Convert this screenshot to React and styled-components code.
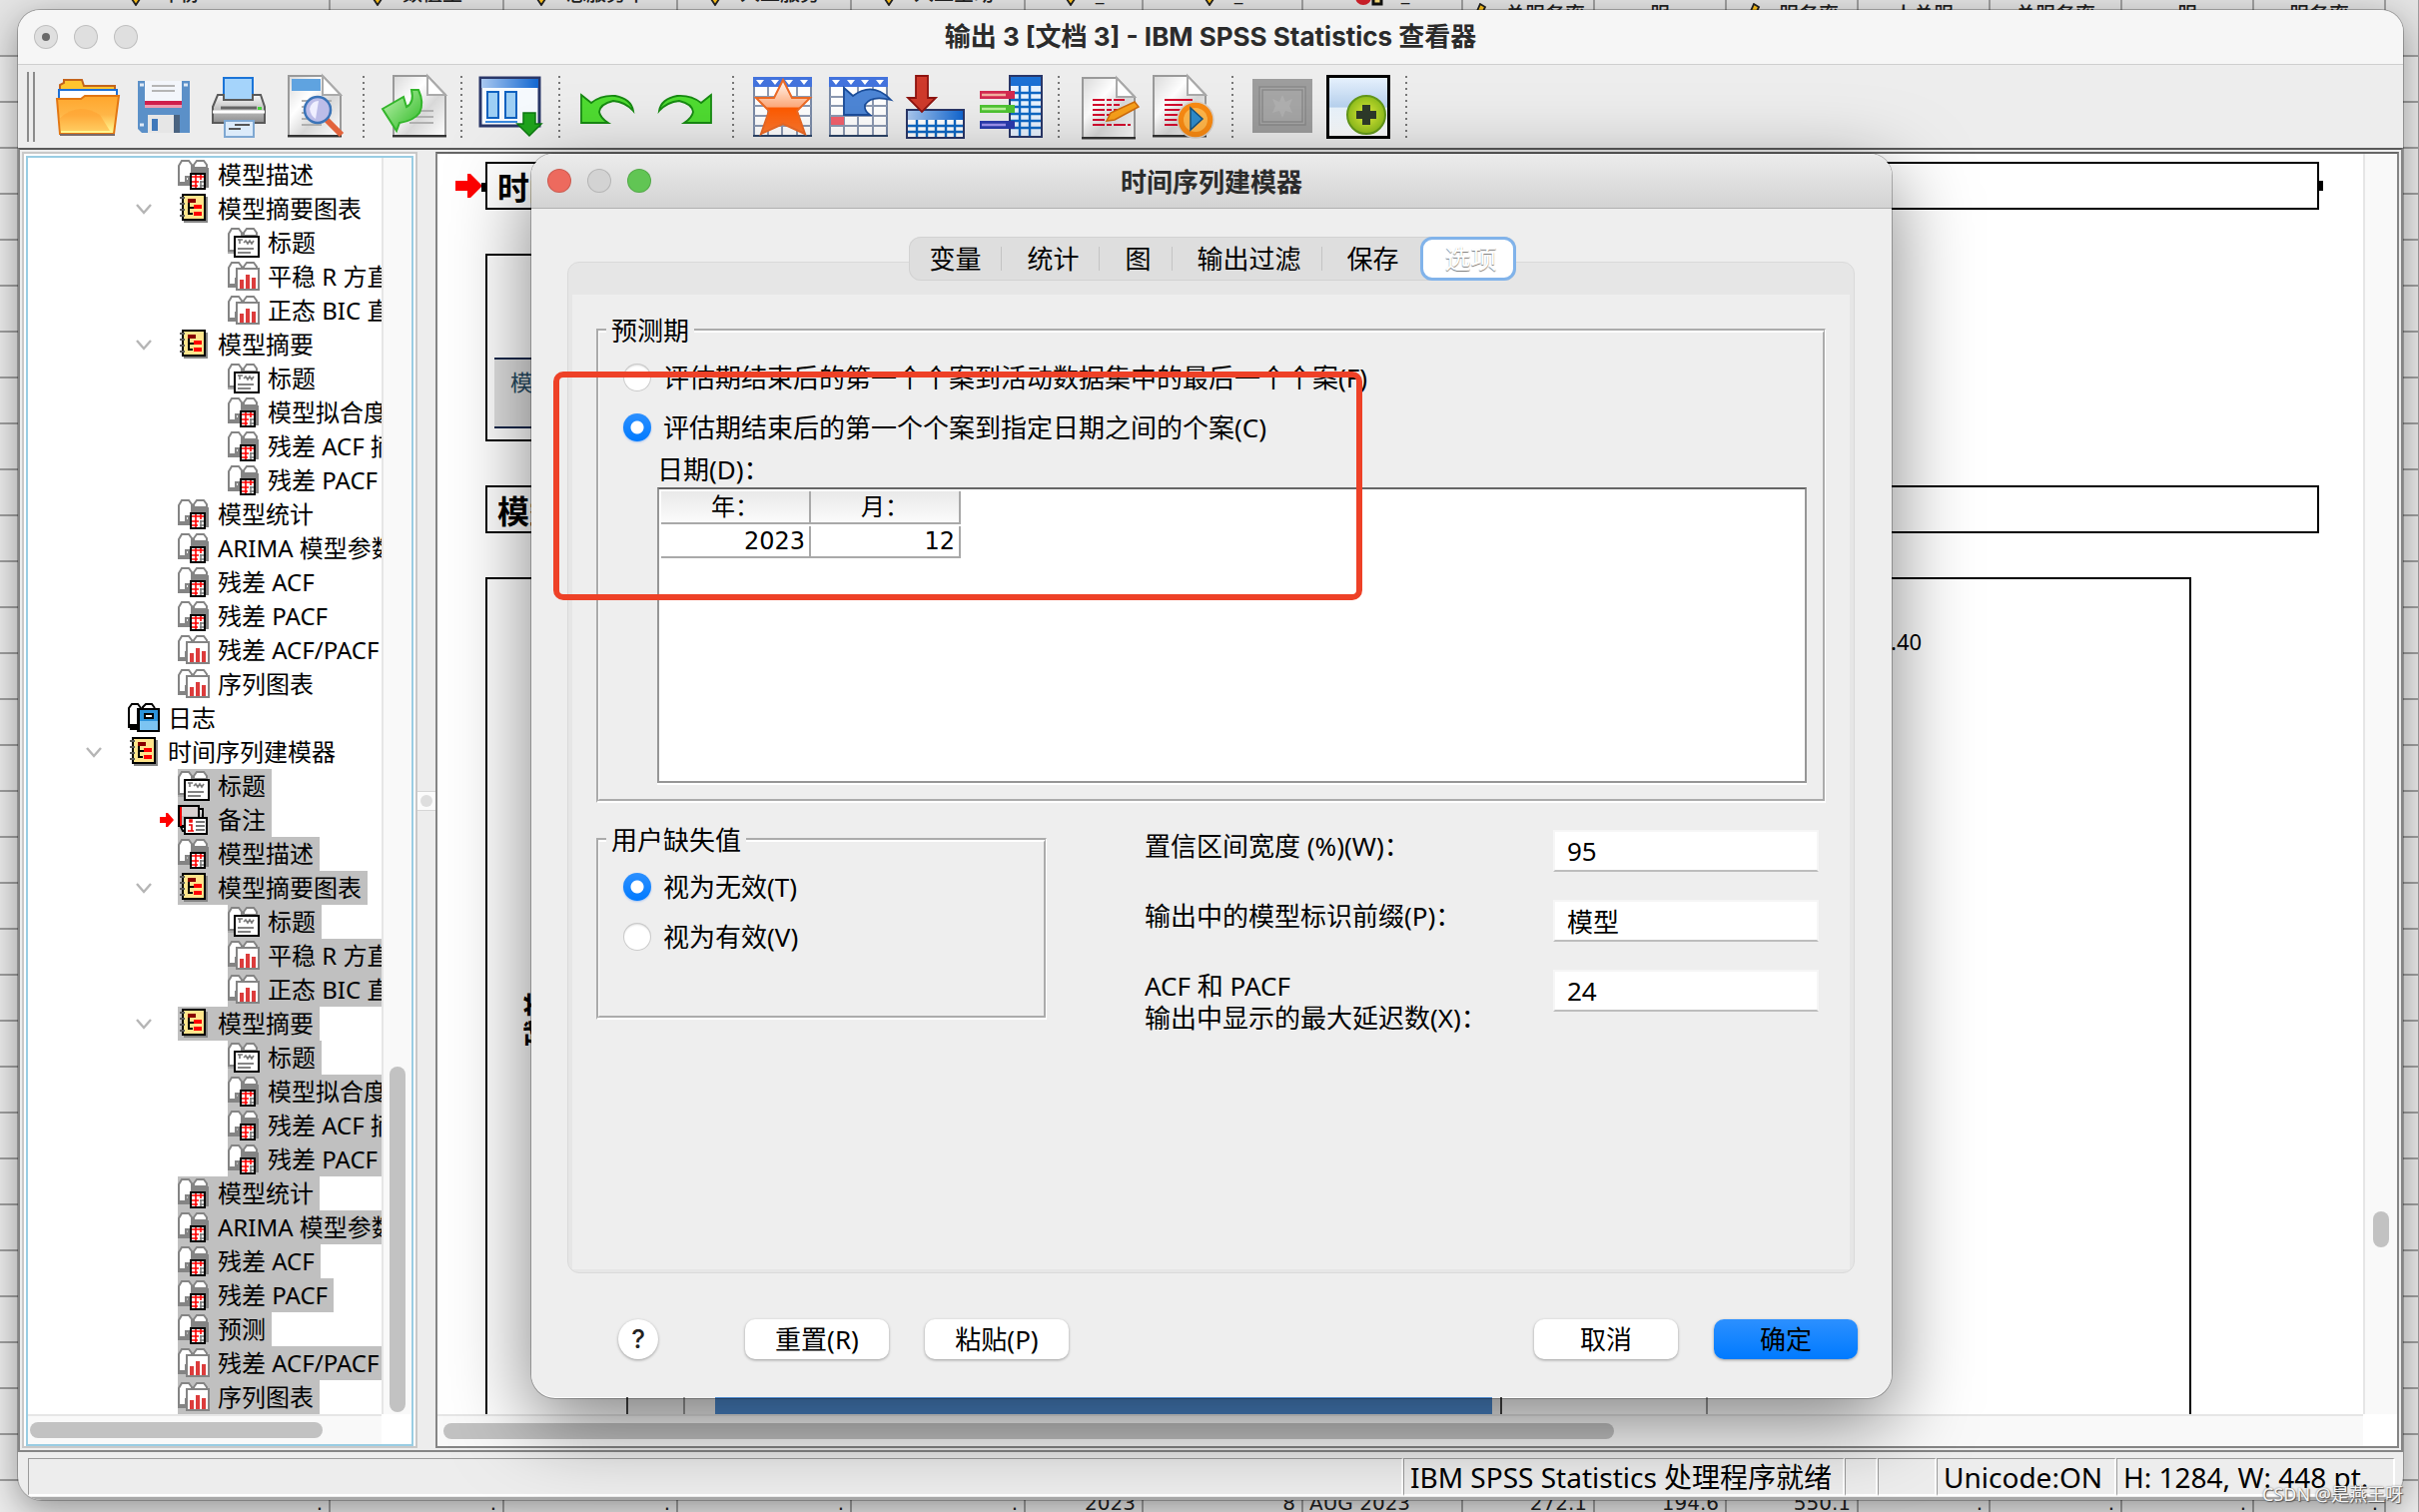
import React from "react";
import styled, { createGlobalStyle, css } from "styled-components";

const Global = createGlobalStyle`
  * { box-sizing: border-box; }
  body { margin: 0; background: #ececec; }
  body, button, input, table {
    font-family: "Noto Sans", "Noto Sans CJK SC", sans-serif;
    color: #000;
  }
`;

const Desktop = styled.div`
  position: relative;
  overflow: hidden;
  height: 100vh;
  padding: 10px 16px 0 18px;
`;

/* ---------- data editor behind the viewer ---------- */

const Sheet = styled.table`
  position: absolute;
  inset: 0 0 auto 0;
  width: 100%;
  table-layout: fixed;
  border-collapse: collapse;
  background: #ededed;
  font-size: 20px;
  line-height: 24px;
  color: #222;
`;
const SheetHead = styled.th`
  height: 56px;
  padding: 0 8px;
  border-right: 2px solid #a0a0a0;
  border-bottom: 2px solid #a0a0a0;
  background: #e4e4e4;
  font-weight: 500;
  vertical-align: top;
  white-space: nowrap;
  overflow: hidden;
`;
const HeadText = styled.span`
  display: flex;
  justify-content: center;
  align-items: flex-end;
  gap: 18px;
  margin-top: ${(p) => (p.$low ? "3px" : "-18px")};
`;
const SheetCell = styled.td`
  height: 46px;
  padding: 0 6px;
  border-bottom: 2px solid #a0a0a0;
  border-right: 2px solid #a0a0a0;
  text-align: ${(p) => (p.$left ? "left" : "right")};
  font-family: "DejaVu Sans", sans-serif;
  white-space: nowrap;
`;

const columns = [
  { w: 330, name: "年份", pen: true, v: "." },
  { w: 174, name: "数值型", pen: true, v: "." },
  { w: 174, name: "总服务率", pen: true, v: "." },
  { w: 174, name: "人工服务", pen: true, v: "." },
  { w: 174, name: "人工呈动", pen: true, v: "." },
  { w: 118, name: "_", pen: true, v: "2023" },
  { w: 160, name: "_", pen: true, v: "8" },
  { w: 160, name: "_", dot: true, v: "AUG 2023", left: true },
  { w: 132, name: "总服务率", low: true, pen: true, v: "272.1" },
  { w: 132, name: "服", low: true, v: "194.6" },
  { w: 132, name: "服务率", low: true, pen: true, v: "550.1" },
  { w: 132, name: "人总服", low: true, v: "." },
  { w: 132, name: "总服务率", low: true, v: "." },
  { w: 132, name: "服", low: true, v: "." },
  { w: 132, name: "服务率", low: true, v: "." },
  { w: 34, name: "", v: "" },
];

const Pencil = () => (
  <svg width="14" height="24" viewBox="0 0 14 24">
    <path d="M4 1h7v16l-4 6-4-6z" fill="#ffc21a" stroke="#222" strokeWidth="1.8" />
  </svg>
);
const SlantPencil = () => (
  <svg width="16" height="24" viewBox="0 0 16 24">
    <path d="M9 1l5 3-7 15-5 4 1-8z" fill="#ffc21a" stroke="#222" strokeWidth="1.8" />
  </svg>
);
const RedBall = () => (
  <svg width="28" height="22" viewBox="0 0 28 22">
    <circle cx="8" cy="13" r="8" fill="#d3202a" />
    <path d="M18 6h8v14h-8z" fill="#ffe27a" stroke="#111" strokeWidth="3" />
  </svg>
);

/* ---------- viewer window ---------- */

const Viewer = styled.main`
  position: relative;
  border-radius: 22px 22px 24px 24px;
  overflow: hidden;
  background: #ededed;
  box-shadow: 0 0 0 1px rgba(0, 0, 0, 0.25);
`;
const ViewerShadow = styled.div`
  position: relative;
  border-radius: 22px;
  box-shadow: 0 10px 36px rgba(0, 0, 0, 0.38);
`;
const TitleBar = styled.header`
  display: grid;
  grid-template-columns: 160px 1fr 160px;
  align-items: center;
  height: 55px;
  padding-left: 16px;
  padding-right: 16px;
  background: ${(p) => (p.$dialog ? "linear-gradient(#ececec, #d3d3d3)" : "#f6f6f6")};
  border-bottom: 1px solid ${(p) => (p.$dialog ? "#b0b0b0" : "#cfcfcf")};
`;
const Lights = styled.div`
  display: flex;
  gap: 16px;
`;
const Light = styled.button`
  width: 24px;
  height: 24px;
  padding: 0;
  border: 1px solid rgba(0, 0, 0, 0.14);
  border-radius: 50%;
  background: ${(p) => p.$color || "#dfdfdf"};
  display: grid;
  place-items: center;
`;
const EditedDot = styled.i`
  width: 8px;
  height: 8px;
  border-radius: 50%;
  background: #6a6a6a;
`;
const Title = styled.h1`
  margin: 0;
  text-align: center;
  font-size: 26px;
  line-height: 34px;
  font-family: ${(p) => (p.$dialog ? '"Noto Sans CJK SC"' : 'Inter, "Noto Sans CJK SC"')}, sans-serif;
  font-weight: 700;
  color: #2b2b2b;
`;

const Toolbar = styled.div`
  display: flex;
  align-items: center;
  height: 83px;
  padding: 0 0 0 9px;
`;
const Grip = styled.i`
  width: 8px;
  height: 70px;
  margin-right: 15px;
  border: solid #8c8c8c;
  border-width: 0 2px;
`;
const ToolButton = styled.button`
  width: 76px;
  height: 76px;
  padding: 6px;
  border: 0;
  background: none;
  svg { display: block; overflow: visible; }
`;
const ToolGap = styled.i`
  width: 22px;
  height: 62px;
  border: 0;
  background: repeating-linear-gradient(#777 0 2px, transparent 2px 6px) 9px 0 / 2px 100% no-repeat;
`;

const Body = styled.div`
  display: flex;
  padding: 2px;
  border: 2px solid #858585;
  border-top-color: #5a5a5a;
`;

/* ---------- outline tree ---------- */

const OutlineFrame = styled.div`
  flex: none;
  width: 396px;
  padding: 2px 2px 0;
  border: 2px solid #c8c8c8;
  background: #fff;
`;
const Outline = styled.nav`
  display: grid;
  grid-template-columns: 1fr 30px;
  grid-template-rows: auto 30px;
  border: 2px solid #99cde3;
`;
const Tree = styled.ul`
  margin: 0;
  padding: 0;
  list-style: none;
  overflow: hidden;
`;
const Row = styled.li`
  display: flex;
  align-items: center;
  height: 34px;
  padding-left: ${(p) => p.$level * 50}px;
  white-space: nowrap;
`;
const Lead = styled.span`
  flex: none;
  width: 50px;
  height: 34px;
  display: flex;
  align-items: center;
  justify-content: ${(p) => (p.$end ? "flex-end" : "flex-start")};
  padding: 0 4px 0 7px;
`;
const Node = styled.a`
  flex: none;
  display: flex;
  align-items: center;
  gap: 8px;
  height: 34px;
  padding-right: 6px;
  font-size: 24px;
  line-height: 34px;
  color: #000;
  text-decoration: none;
  background: ${(p) => (p.$on ? "#c0c0c0" : "transparent")};
`;

const Track = styled.div`
  display: flex;
  background: #f9f9f9;
  border: 0 solid #e6e6e6;
  ${(p) =>
    p.$vertical
      ? css`
          flex-direction: column;
          align-items: center;
          justify-content: ${p.$end ? "flex-end" : "flex-start"};
          border-left-width: 2px;
          padding: ${p.$before || 0}px 0 2px;
        `
      : css`
          align-items: center;
          border-top-width: 2px;
          padding-left: ${p.$before || 2}px;
        `}
`;
const Thumb = styled.i`
  width: ${(p) => p.$w};
  height: ${(p) => p.$h};
  border-radius: 8px;
  background: #c2c2c2;
`;

const Splitter = styled.div`
  flex: none;
  width: 18px;
  display: flex;
  flex-direction: column;
  padding-top: 640px;
`;
const Knob = styled.i`
  height: 20px;
  display: grid;
  place-items: center;
  background: #fbfbfb;
  border: solid #d6d6d6;
  border-width: 1px 0;
  &::after {
    content: "";
    width: 12px;
    height: 12px;
    border-radius: 50%;
    background: #dedede;
  }
`;

/* ---------- output pane ---------- */

const Output = styled.section`
  flex: 1;
  min-width: 0;
  display: grid;
  grid-template-columns: 1fr 34px;
  grid-template-rows: 1fr 32px;
  border: 2px solid #858585;
  border-top-color: #666;
  background: #fff;
`;
const Page = styled.div`
  display: flex;
  flex-direction: column;
  gap: 44px;
  min-height: 0;
  overflow: hidden;
  padding: 8px 38px 0 16px;
`;
const HeadingRow = styled.div`
  display: grid;
  grid-template-columns: 32px 1fr 6px;
  align-items: center;
`;
const Heading = styled.h2`
  margin: 0;
  height: 48px;
  padding-left: 10px;
  border: 2px solid #000;
  font-size: 32px;
  line-height: 48px;
  font-weight: 700;
  overflow: hidden;
`;
const Handle = styled.i`
  width: 4px;
  height: 10px;
  background: #000;
`;
const PivotFrame = styled.div`
  height: 188px;
  width: 1100px;
  margin-left: 32px;
  padding: 102px 7px 0;
  border: 2px solid #000;
`;
const PivotCell = styled.div`
  height: 71px;
  padding: 6px 16px;
  border: solid #14284b;
  border-width: 2px 0;
  background: #e0e0e0;
  color: #264a60;
  font-size: 22px;
  line-height: 32px;
`;
const ChartFrame = styled.div`
  flex: 1;
  display: flex;
  width: 1708px;
  margin-left: 32px;
  border: 2px solid #000;
  border-bottom: 0;
`;
const AxisTitle = styled.div`
  width: 139px;
  padding: 0 0 368px 32px;
  writing-mode: sideways-lr;
  font-size: 28px;
  line-height: 36px;
  font-weight: 700;
`;
const Plot = styled.div`
  width: 877px;
  padding: 760px 8px 0 55px;
  border: solid #444;
  border-width: 0 2px;
  background: #f0f0f0;
  display: flex;
`;
const Bar = styled.i`
  flex: 1;
  padding: 0;
  border-left: 2px solid #999;
  background: linear-gradient(90deg, #f0f0f0 30px, #4b87cb 30px);
`;
const Side = styled.div`
  width: 206px;
  border-right: 2px solid #999;
`;
const Tick = styled.div`
  margin: 49px 0 0 183px;
  font-size: 22px;
  line-height: 26px;
`;

/* ---------- status bar ---------- */

const Status = styled.footer`
  display: flex;
  height: 48px;
  padding: 6px 8px 6px 10px;
  border-bottom: 3px solid #a8a8a8;
  font-size: 28px;
  line-height: 38px;
`;
const StatusCell = styled.div`
  flex: ${(p) => (p.$w ? "none" : 1)};
  width: ${(p) => p.$w || "auto"};
  padding-left: 6px;
  border: 1px solid #9c9c9c;
  border-right: 2px solid #fff;
  border-bottom: 2px solid #fff;
  white-space: nowrap;
  height: 38px;
  line-height: 36px;
`;

/* ---------- dialog ---------- */

const Dialog = styled.section`
  position: absolute;
  left: 532px;
  top: 154px;
  width: 1362px;
  border-radius: 22px 22px 24px 24px;
  overflow: hidden;
  background: #eee;
`;
const DialogShadow = styled(Dialog)`
  height: 1246px;
  background: none;
  box-shadow: 0 0 0 1px rgba(0, 0, 0, 0.25), 0 24px 80px rgba(0, 0, 0, 0.5);
`;
const DialogBody = styled.form`
  display: flex;
  flex-direction: column;
  padding: 28px 34px 38px 36px;
`;
const Tabs = styled.div`
  position: relative;
  align-self: center;
  display: flex;
  height: 44px;
  margin-bottom: -19px;
  border-radius: 12px;
  background: #dedede;
  box-shadow: inset 0 0 0 1px #d2d2d2;
`;
const Tab = styled.button`
  height: 44px;
  padding: 0 21px 0 25px;
  border: 0;
  background: linear-gradient(#c4c4c4, #c4c4c4) right center / ${(p) => (p.$line ? "1px 24px" : "0 0")} no-repeat;
  font-size: 26px;
  line-height: 40px;
  &:first-child { padding-left: 20px; }
  ${(p) =>
    p.$on &&
    css`
      padding: 0 16px 0 22px;
      line-height: 36px;
      border: 3px solid #81b3ea;
      border-radius: 12px;
      background: #fff;
      color: #fff;
      text-shadow: 0 1px 1px #777;
    `}
`;
const Panel = styled.div`
  margin-right: 3px;
  padding: 32px 4px 3px;
  border: 1px solid #dadada;
  border-radius: 12px;
  background: #e6e6e6;
`;
const PanelInner = styled.div`
  display: flex;
  flex-direction: column;
  gap: 24px;
  min-height: 976px;
  padding: 23px 24px 0;
  background: #eee;
`;
const Group = styled.fieldset`
  margin: 0;
  min-width: 0;
  padding: ${(p) => (p.$small ? "9px 16px 54px 24px" : "9px 16px 16px 24px")};
  border: groove #fff;
  border-width: 4px 3px;
`;
const Legend = styled.legend`
  margin-left: -17px;
  padding: 0 5px;
  font-size: 26px;
  line-height: 26px;
`;
const Choice = styled.label`
  display: flex;
  align-items: center;
  gap: 12px;
  height: 50px;
  font-size: 26px;
  line-height: 32px;
`;
const Radio = styled.input`
  appearance: none;
  width: 28px;
  height: 28px;
  margin: 0;
  border-radius: 50%;
  background: #fff;
  box-shadow: inset 0 0 0 1px #cacaca, inset 0 2px 2px #ddd;
  &:checked {
    background: radial-gradient(circle, #fff 0 6px, transparent 7px), linear-gradient(#2c90ff, #007aff);
    box-shadow: 0 1px 2px rgba(0, 100, 255, 0.3);
  }
`;
const Dates = styled.div`
  margin-left: 34px;
`;
const Caption = styled.div`
  font-size: 26px;
  line-height: 35px;
`;
const DateBox = styled.div`
  height: 296px;
  padding: 2px;
  border: 2px solid #969696;
  border-top-color: #666;
  background: #fff;
  box-shadow: 0 2px #fff;
`;
const DateTable = styled.table`
  border-collapse: separate;
  border-spacing: 0 2px;
  margin-top: -2px;
  font-family: "DejaVu Sans", "Noto Sans CJK SC", sans-serif;
  font-size: 24px;
  line-height: 30px;
`;
const DateHead = styled.th`
  width: 150px;
  height: 33px;
  padding: 0;
  border: solid #a9a9a9;
  border-width: 0 2px 2px 0;
  background: linear-gradient(#e9e9e9, #fbfbfb);
  font-weight: 400;
`;
const DateCell = styled.td`
  height: 32px;
  padding: 0 4px 0 0;
  border: solid #a9a9a9;
  border-width: 0 2px 2px 0;
  text-align: right;
`;
const Lower = styled.div`
  display: grid;
  grid-template-columns: 451px 1fr;
  column-gap: 98px;
  align-items: start;
`;
const Fields = styled.div`
  display: grid;
  gap: 28px;
  padding: 3px 7px 0 0;
`;
const Field = styled.div`
  display: grid;
  grid-template-columns: 1fr 266px;
  height: 42px;
`;
const FieldLabel = styled.label`
  font-size: 26px;
  line-height: 32px;
  white-space: pre-line;
`;
const TextBox = styled.input`
  height: 42px;
  min-width: 0;
  padding: 0 12px;
  border: 2px solid #f6f6f6;
  border-bottom-color: #bdbdbd;
  background: #fff;
  font-size: 26px;
`;
const Footer = styled.div`
  display: flex;
  align-items: center;
  gap: 36px;
  padding: 46px 0 0 51px;
`;
const Push = styled.button`
  width: 144px;
  height: 40px;
  padding: 0;
  border: 0;
  border-radius: 10px;
  background: ${(p) => (p.$primary ? "linear-gradient(#2c90ff, #007aff)" : "#fff")};
  box-shadow: 0 1px 3px rgba(0, 0, 0, 0.35);
  font-size: 26px;
  line-height: 36px;
`;
const Help = styled(Push)`
  width: 40px;
  margin-right: 51px;
  border-radius: 50%;
  font-family: Inter, sans-serif;
  font-weight: 500;
  color: #222;
`;
const Spacer = styled.i`
  flex: 1;
`;

const Callout = styled.div`
  position: absolute;
  left: 554px;
  top: 372px;
  width: 810px;
  height: 229px;
  border: 6px solid #ee4127;
  border-radius: 10px;
  pointer-events: none;
`;
const Credit = styled.div`
  position: absolute;
  right: 16px;
  bottom: 6px;
  font-size: 18px;
  line-height: 24px;
  color: #f4f4f4;
  text-shadow: 1px 1px 1px #555, 0 0 2px #777;
`;

/* ---------- outline icons ---------- */

const Pages = ({ dark = "#848484" }) => (
  <>
    <path d="M10 10h21v20h-3v-2H0v-6h10z" fill={dark} />
    <path d="M1 25V8l3-5h7l3 4v12h-6v6z" fill="#fff" stroke="#848484" strokeWidth="2" />
    <path d="M16 10V7l3-4h7l3 4v3z" fill="#fff" stroke="#848484" strokeWidth="2" />
  </>
);
const treeIcons = {
  table: (
    <>
      <Pages />
      <path d="M13 16h14v15H13z" fill="#fff" stroke="#000" strokeWidth="2" />
      <path d="M14 19h12M14 24h7M14 28h6M18 17v13M23 17v5" stroke="#f00" strokeWidth="1.6" />
      <path d="M22 24h4M22 28h4M23 23v7" stroke="#777" strokeWidth="1.5" />
    </>
  ),
  title: (
    <>
      <Pages dark="#aaa" />
      <path d="M7 11h24v20H7z" fill="#fff" stroke="#000" strokeWidth="2" />
      <path d="M10 14h5M12 14v4M16 17l2-2 2 3 2-3 2 3 2-3" stroke="#777" strokeWidth="1.6" fill="none" />
      <path d="M10 23h16M10 27h13" stroke="#848484" strokeWidth="2" />
    </>
  ),
  chart: (
    <>
      <Pages />
      <path d="M9 9h22v21H9z" fill="#fff" stroke="#848484" strokeWidth="2" />
      <path d="M12 20h4v9h-4zM18 15h4v14h-4zM24 18h4v11h-4z" fill="#dc3c3c" />
    </>
  ),
  book: (
    <>
      <path d="M6 5h24v26H6z" fill="#848484" />
      <path d="M5 3h22v25H5z" fill="#ffe58c" stroke="#000" strokeWidth="2" />
      <path d="M2 6h5M2 12h5M2 18h5M2 24h5" stroke="#555" strokeWidth="2" />
      <path d="M10 7h8v4h-8z" fill="#800" />
      <path d="M11 11v11h4M11 16h5" stroke="#000" strokeWidth="2" fill="none" />
      <path d="M16 13h8v4h-8zM16 20h8v4h-8z" fill="#f00" />
    </>
  ),
  log: (
    <>
      <path d="M1 26V7l3-4h6l3 4v19zM15 9V6l3-3h6l3 4" fill="#fff" stroke="#000" strokeWidth="2" />
      <path d="M2 23h7v6H2z" fill="#000" />
      <path d="M10 8h21v22H10z" fill="#7cc4f2" stroke="#000" strokeWidth="2" />
      <path d="M11 9h19v11H11z" fill="#2c93db" />
      <path d="M9 8h3v23H9z" fill="#000" />
      <path d="M17 13h8v4h-8z" fill="#fff" stroke="#000" strokeWidth="2" />
    </>
  ),
  note: (
    <>
      <path d="M1 3h20v20H1z" fill="#d8d0d0" stroke="#000" strokeWidth="2" />
      <path d="M4 13h16v9H4z" fill="#bcbcbc" />
      <path d="M3 4v20" stroke="#e00" strokeWidth="2" />
      <path d="M3 24h6v4H5zM22 6h3v10" fill="#fff" stroke="#000" strokeWidth="2" />
      <path d="M7 15h22v16H7z" fill="#fff" stroke="#000" strokeWidth="2" />
      <path d="M12 17h2v2h-2zM11 22h3v6M10 28h6" stroke="#e00" strokeWidth="1.6" fill="none" />
      <path d="M18 19h9M18 23h9M18 27h9" stroke="#777" strokeWidth="2" />
    </>
  ),
};
const TreeIcon = ({ kind }) => (
  <svg width="32" height="34" viewBox="0 0 32 34">{treeIcons[kind]}</svg>
);
const Chevron = () => (
  <svg width="18" height="12" viewBox="0 0 18 12">
    <path d="M2 2l7 8 7-8" fill="none" stroke="#b5b5b5" strokeWidth="2.4" />
  </svg>
);
const SmallArrow = () => (
  <svg width="14" height="14" viewBox="0 0 14 14">
    <path d="M0 4h6V0h2l6 7-6 7H6v-4H0z" fill="#f00" />
  </svg>
);

const report = [
  [2, "table", "模型描述"],
  [2, "book", "模型摘要图表"],
  [3, "title", "标题"],
  [3, "chart", "平稳 R 方直方图"],
  [3, "chart", "正态 BIC 直方图"],
  [2, "book", "模型摘要"],
  [3, "title", "标题"],
  [3, "table", "模型拟合度"],
  [3, "table", "残差 ACF 摘要"],
  [3, "table", "残差 PACF 摘要"],
  [2, "table", "模型统计"],
  [2, "table", "ARIMA 模型参数"],
  [2, "table", "残差 ACF"],
  [2, "table", "残差 PACF"],
];
const charts = [
  [2, "chart", "残差 ACF/PACF 图"],
  [2, "chart", "序列图表"],
];
const pick = (list) => list.map(([level, kind, text]) => [level, kind, text, true]);
const tree = [
  ...report,
  ...charts,
  [1, "log", "日志"],
  [1, "book", "时间序列建模器"],
  ...pick([[2, "title", "标题"], [2, "note", "备注"], ...report, [2, "table", "预测"], ...charts]),
];

/* ---------- toolbar icons ---------- */

const Sheetlet = ({ x }) => (
  <>
    <path d={`M${x} 1h34l18 19v42h-52z`} fill="url(#paper)" stroke="#9a9a9a" strokeWidth="2" />
    <path d={`M${x + 34} 1v19h18z`} fill="#fff" stroke="#aaa" strokeWidth="2" />
    <path d={`M${x - 1} 61h54`} stroke="#333" strokeWidth="2" />
  </>
);
const CaseGrid = () => (
  <>
    <path d="M3 3h57v58H3z" fill="#fff" stroke="#7b8ba8" strokeWidth="2" />
    <path d="M3 22h57M3 31h57M3 41h57M3 51h57M17 12v49M31 12v49M46 12v49" stroke="#8d9ab2" strokeWidth="2" />
    <path d="M2 2h59v10H2z" fill="#4373dd" />
    <path d="M5 5h8l-4 5zM20 5h8l-4 5zM34 5h8l-4 5zM49 5h8l-4 5z" fill="#fff" />
    <path d="M2 61h59" stroke="#2d4468" strokeWidth="2" />
  </>
);
const Defs = () => (
  <defs>
    <linearGradient id="paper" x1="0" y1="0" x2="1" y2="1">
      <stop offset="0" stopColor="#d9d9d9" />
      <stop offset=".35" stopColor="#fff" />
      <stop offset=".6" stopColor="#d8d8d8" />
      <stop offset="1" stopColor="#fff" />
    </linearGradient>
    <linearGradient id="orange" x1="0" y1="0" x2="0" y2="1">
      <stop offset="0" stopColor="#ffa62c" />
      <stop offset=".5" stopColor="#ffb647" />
      <stop offset="1" stopColor="#ffff9a" />
    </linearGradient>
    <linearGradient id="green" x1="0" y1="0" x2="1" y2="1">
      <stop offset="0" stopColor="#c4f5b6" />
      <stop offset="1" stopColor="#29b81f" />
    </linearGradient>
    <linearGradient id="blue" x1="0" y1="0" x2="1" y2="0">
      <stop offset="0" stopColor="#a9c8f0" />
      <stop offset="1" stopColor="#1166d0" />
    </linearGradient>
    <linearGradient id="star" x1="0" y1="0" x2="0" y2="1">
      <stop offset=".1" stopColor="#ffe9dc" />
      <stop offset=".5" stopColor="#ffab7c" />
      <stop offset=".52" stopColor="#ff5a00" />
      <stop offset="1" stopColor="#ff7a30" />
    </linearGradient>
    <linearGradient id="grey" x1="0" y1="0" x2="0" y2="1">
      <stop offset="0" stopColor="#fafafa" />
      <stop offset="1" stopColor="#8d8d8d" />
    </linearGradient>
    <linearGradient id="sky" x1="0" y1="0" x2="0" y2="1">
      <stop offset="0" stopColor="#e8f2fd" />
      <stop offset=".5" stopColor="#b8d2ef" />
      <stop offset=".52" stopColor="#e9f3fc" />
      <stop offset="1" stopColor="#fff" />
    </linearGradient>
    <radialGradient id="lime">
      <stop offset="0" stopColor="#e3ef3a" />
      <stop offset="1" stopColor="#8dbd1c" />
    </radialGradient>
  </defs>
);
const undoPath = "M4 20L14 28Q24 20 38 21Q54 24 56 36Q48 27 36 26Q23 29 22 37Q23 43 31 48L4 48Z";

const tools = [
  ["打开", <>
    <path d="M4 20V10l4-2v-3h18l2 6h31v11z" fill="#ffc52e" stroke="#c4641c" strokeWidth="2" />
    <path d="M3 15h58v10H3z" fill="#fff" stroke="#1d6fd6" strokeWidth="2" />
    <path d="M1 24h24l4-3h34l-5 38H4z" fill="url(#orange)" stroke="#e27612" strokeWidth="2" />
    <path d="M3 44Q22 26 44 40L54 56H5z" fill="#ff9c2a" opacity=".45" />
    <path d="M4 60h55" stroke="#7a6a6a" strokeWidth="2" />
  </>],
  ["保存", <>
    <path d="M6 6h52v52H10l-4-4z" fill="#5b90c8" />
    <path d="M13 6h37v20H13z" fill="#f3f6fb" />
    <path d="M20 11h23M20 16h23" stroke="#b5b5b5" strokeWidth="2" />
    <path d="M13 26h37v4H13z" fill="#d01e4c" />
    <path d="M13 30h37v3H13z" fill="#f19bb0" />
    <path d="M16 40h32v18H16z" fill="#e6e6e6" />
    <path d="M42 40h6v18h-6z" fill="#4a6380" />
    <path d="M20 44h6v12h-6z" fill="#3f78ba" />
    <path d="M8 10h4M52 10h4M8 50h4" stroke="#dfeaf6" strokeWidth="3" />
  </>],
  ["打印", <>
    <path d="M16 3h29v22H16z" fill="#a5d4fb" stroke="#1a74d8" strokeWidth="2" />
    <path d="M10 20h6v5h29v-5h8l4 12v16H5V32z" fill="url(#grey)" stroke="#5a5a5a" strokeWidth="2" />
    <path d="M13 33h36" stroke="#666" strokeWidth="3" />
    <path d="M5 37h52" stroke="#fff" strokeWidth="3" />
    <path d="M50 32h4v3h-4z" fill="#46d33a" />
    <path d="M17 46h29v16H17z" fill="#dcebfa" stroke="#7fa8d2" strokeWidth="2" />
    <path d="M27 50h15M21 54h12" stroke="#555" strokeWidth="2" />
  </>],
  ["打印预览", <>
    <Sheetlet x={5} />
    <path d="M8 4h29v12H8z" fill="#5fa3e0" />
    <path d="M18 26h30M18 32h30M18 38h30M18 44h20M18 50h20" stroke="#b0b0b0" strokeWidth="2" />
    <path d="M43 45L58 60" stroke="#e2633c" strokeWidth="6" />
    <circle cx="34" cy="35" r="13" fill="#bcbde8" stroke="#3b74b8" strokeWidth="2.5" />
    <path d="M26 34Q28 26 35 26L32 44Q27 41 26 34z" fill="#efefff" />
  </>],
  null,
  ["重新调用对话框", <>
    <Sheetlet x={12} />
    <path d="M34 36h18M32 42h20M28 48h24" stroke="#b0b0b0" strokeWidth="2" />
    <path d="M1 34L22 22L25 32Q33 28 30 15L37 15Q43 28 38 38Q32 46 18 48L15 56Z" fill="url(#green)" stroke="#33b52b" strokeWidth="2" />
  </>],
  null,
  ["对话框", <>
    <path d="M1 3h59v48H1z" fill="#f6fafe" stroke="#2a3768" strokeWidth="3" />
    <path d="M2 4h57v9H2z" fill="url(#blue)" />
    <path d="M8 17h11v26H8zM26 17h11v26H26z" fill="#9fd0f5" stroke="#0f62c0" strokeWidth="2" />
    <path d="M6 47h32" stroke="#3a8ae0" strokeWidth="2" />
    <path d="M44 38h12v11h6L50 61L38 49h6z" fill="#1fa51c" stroke="#0d7a10" strokeWidth="1.5" />
  </>],
  null,
  ["撤销", <path d={undoPath} fill="#4fdc31" stroke="#178a12" strokeWidth="1.8" />],
  ["恢复", <path transform="matrix(-1 0 0 1 62 0)" d={undoPath} fill="#4fdc31" stroke="#178a12" strokeWidth="1.8" />],
  null,
  ["转到数据", <>
    <CaseGrid />
    <path d="M32 5L41 23H59L46 36L54 59L32 49L10 59L18 36L5 23H23Z" fill="url(#star)" stroke="#ec6a25" strokeWidth="2" />
  </>],
  ["转到个案", <>
    <CaseGrid />
    <path d="M4 42h13v8H4z" fill="#f2606c" />
    <path d="M17 13L26 21Q46 6 64 25Q44 20 38 30Q37 36 43 40H17Z" fill="#4d86d6" stroke="#1b4d9a" strokeWidth="1.8" />
  </>],
  ["转到变量", <>
    <path d="M4 35h57v28H4z" fill="#fff" stroke="#2a3768" strokeWidth="2" />
    <path d="M5 36h55v9H5z" fill="url(#blue)" />
    <path d="M5 51h55M5 57h55M14 45v17M24 45v17M33 45v17M43 45v17M52 45v17" stroke="#0f68c4" strokeWidth="2.4" />
    <path d="M13 1h12v22h8L19 37L5 23h8z" fill="#cf3a2c" stroke="#8e1410" strokeWidth="1.8" />
  </>],
  ["变量", <>
    <path d="M31 1h32v61H31z" fill="#e8f3ff" stroke="#2a3768" strokeWidth="2" />
    <path d="M32 2h30v9H32z" fill="#1b70d4" />
    <path d="M32 18h30M32 25h30M32 32h30M32 39h30M32 46h30M32 53h30M41 11v50M51 11v50" stroke="#0f68c4" strokeWidth="2.4" />
    <path d="M1 16h35v8H1z" fill="#d32a50" /><path d="M3 20h24" stroke="#f3b0a0" strokeWidth="2.5" />
    <path d="M1 30h35v8H1z" fill="#4fc332" /><path d="M3 34h24" stroke="#b9f29c" strokeWidth="2.5" />
    <path d="M1 46h35v8H1z" fill="#2b3cae" /><path d="M3 50h24" stroke="#9d93f0" strokeWidth="2.5" />
  </>],
  null,
  ["新建语法", <>
    <g transform="translate(2 2)"><Sheetlet x={4} /></g>
    <path d="M16 25h32M16 30h27M16 35h27M16 40h18M16 45h14M16 50h38" stroke="#d3092e" strokeWidth="2" strokeDasharray="12 2 5 2" />
    <path d="M30 46l4-8L58 27l4 5-24 13z" fill="#f8a01a" stroke="#cf6c0c" strokeWidth="1.5" />
  </>],
  ["运行脚本", <>
    <Sheetlet x={1} />
    <path d="M12 25h28M12 30h18M12 35h16M12 40h14M12 45h14M12 50h16" stroke="#d3092e" strokeWidth="2" />
    <circle cx="43" cy="45" r="18" fill="#f98a12" stroke="#d8d0c8" strokeWidth="1.5" />
    <circle cx="43" cy="45" r="12" fill="#ffb64a" />
    <path d="M38 33l12 11-12 11z" fill="#2f8ccc" stroke="#15527e" strokeWidth="1.5" />
  </>],
  null,
  ["选择", <>
    <path d="M2 4h60v54H2z" fill="#9d9d9d" />
    <path d="M9 12h46v38H9zM12 15h40v32H12z" fill="#a6a6a6" stroke="#8a8a8a" strokeWidth="1.5" />
    <path d="M32 20l3 7 7-3-3 7 3 7-7-2-3 7-3-7-7 2 3-7-3-7 7 3z" fill="#b0b0b0" />
  </>],
  ["添加", <>
    <path d="M1.5 1.5h61v61h-61z" fill="url(#sky)" stroke="#000" strokeWidth="3" />
    <circle cx="40" cy="40" r="19" fill="url(#lime)" stroke="#63981a" strokeWidth="2" />
    <path d="M36 30h8v6h6v8h-6v6h-8v-6h-6v-8h6z" fill="#2e3a2a" />
  </>],
  null,
];

export default function App() {
  return (
    <>
      <Global />
      <Desktop>
        <Sheet aria-hidden="true">
          <colgroup>
            {columns.map((c, i) => <col key={i} style={{ width: c.w }} />)}
          </colgroup>
          <thead>
            <tr>
              {columns.map((c, i) => (
                <SheetHead key={i}>
                  <HeadText $low={c.low}>
                    {c.pen && (c.low ? <SlantPencil /> : <Pencil />)}
                    {c.dot && <RedBall />}
                    {c.name}
                  </HeadText>
                </SheetHead>
              ))}
            </tr>
          </thead>
          <tbody>
            {Array.from({ length: 31 }, (_, i) => (
              <tr key={i}><SheetCell colSpan={columns.length} /></tr>
            ))}
            <tr>{columns.map((c, i) => <SheetCell key={i} $left={c.left}>{c.v}</SheetCell>)}</tr>
          </tbody>
        </Sheet>

        <ViewerShadow>
          <Viewer>
            <TitleBar>
              <Lights>
                <Light aria-label="关闭"><EditedDot /></Light>
                <Light aria-label="最小化" />
                <Light aria-label="缩放" />
              </Lights>
              <Title>输出 3 [文档 3] - IBM SPSS Statistics 查看器</Title>
            </TitleBar>
            <Toolbar>
              <Grip />
              {tools.map((t, i) =>
                t ? (
                  <ToolButton key={i} aria-label={t[0]}>
                    <svg width="64" height="64" viewBox="0 0 64 64">
                      {i === 0 && <Defs />}
                      {t[1]}
                    </svg>
                  </ToolButton>
                ) : (
                  <ToolGap key={i} />
                )
              )}
            </Toolbar>
            <Body>
              <OutlineFrame>
                <Outline>
                  <Tree>
                    {tree.map(([level, kind, text, on], i) => (
                      <Row key={i} $level={level}>
                        <Lead $end={kind === "note"}>
                          {kind === "book" && <Chevron />}
                          {kind === "note" && <SmallArrow />}
                        </Lead>
                        <Node href="#" $on={on}>
                          <TreeIcon kind={kind} />
                          {text}
                        </Node>
                      </Row>
                    ))}
                  </Tree>
                  <Track $vertical $end><Thumb $w="16px" $h="346px" /></Track>
                  <Track><Thumb $w="293px" $h="16px" /></Track>
                </Outline>
              </OutlineFrame>
              <Splitter><Knob /></Splitter>
              <Output>
                <Page>
                  <HeadingRow>
                    <svg width="32" height="26" viewBox="0 0 32 26">
                      <path d="M2 8h12V1h3l12 12-12 12h-3v-7H2z" fill="#f00" />
                      <path d="M28 10h4v9h-4z" fill="#000" />
                    </svg>
                    <Heading>时间序列建模器</Heading>
                    <Handle />
                  </HeadingRow>
                  <PivotFrame><PivotCell>模型</PivotCell></PivotFrame>
                  <HeadingRow>
                    <span />
                    <Heading>模型摘要</Heading>
                  </HeadingRow>
                  <ChartFrame>
                    <AxisTitle>残差</AxisTitle>
                    <Plot><Bar /></Plot>
                    <Side />
                    <Tick>.40</Tick>
                  </ChartFrame>
                </Page>
                <Track $vertical $before={1059}><Thumb $w="16px" $h="36px" /></Track>
                <Track $before={6}><Thumb $w="61%" $h="16px" /></Track>
              </Output>
            </Body>
            <Status>
              <StatusCell />
              <StatusCell $w="442px">IBM SPSS Statistics 处理程序就绪</StatusCell>
              <StatusCell $w="33px" />
              <StatusCell $w="59px" />
              <StatusCell $w="180px">Unicode:ON</StatusCell>
              <StatusCell $w="279px">H: 1284, W: 448 pt.</StatusCell>
            </Status>
          </Viewer>
        </ViewerShadow>

        <DialogShadow as="div" />
        <Dialog role="dialog" aria-label="时间序列建模器">
          <TitleBar $dialog>
            <Lights>
              <Light aria-label="关闭" $color="#ed6a5e" />
              <Light aria-label="最小化" $color="#d3d3d3" />
              <Light aria-label="缩放" $color="#61c554" />
            </Lights>
            <Title $dialog>时间序列建模器</Title>
          </TitleBar>
          <DialogBody onSubmit={(e) => e.preventDefault()}>
            <Tabs role="tablist">
              {["变量", "统计", "图", "输出过滤", "保存", "选项"].map((t, i) => (
                <Tab key={t} type="button" role="tab" $on={i === 5} $line={i < 4}>{t}</Tab>
              ))}
            </Tabs>
            <Panel>
              <PanelInner>
                <Group>
                  <Legend>预测期</Legend>
                  <Choice>
                    <Radio type="radio" name="period" />
                    评估期结束后的第一个个案到活动数据集中的最后一个个案(F)
                  </Choice>
                  <Choice>
                    <Radio type="radio" name="period" defaultChecked />
                    评估期结束后的第一个个案到指定日期之间的个案(C)
                  </Choice>
                  <Dates>
                    <Caption>日期(D)：</Caption>
                    <DateBox>
                      <DateTable>
                        <thead><tr><DateHead>年：</DateHead><DateHead>月：</DateHead></tr></thead>
                        <tbody><tr><DateCell>2023</DateCell><DateCell>12</DateCell></tr></tbody>
                      </DateTable>
                    </DateBox>
                  </Dates>
                </Group>
                <Lower>
                  <Group $small>
                    <Legend>用户缺失值</Legend>
                    <Choice>
                      <Radio type="radio" name="missing" defaultChecked />
                      视为无效(T)
                    </Choice>
                    <Choice>
                      <Radio type="radio" name="missing" />
                      视为有效(V)
                    </Choice>
                  </Group>
                  <Fields>
                    <Field>
                      <FieldLabel htmlFor="width">置信区间宽度 (%)(W)：</FieldLabel>
                      <TextBox id="width" defaultValue="95" />
                    </Field>
                    <Field>
                      <FieldLabel htmlFor="prefix">输出中的模型标识前缀(P)：</FieldLabel>
                      <TextBox id="prefix" defaultValue="模型" />
                    </Field>
                    <Field>
                      <FieldLabel htmlFor="lags">{"ACF 和 PACF\n输出中显示的最大延迟数(X)："}</FieldLabel>
                      <TextBox id="lags" defaultValue="24" />
                    </Field>
                  </Fields>
                </Lower>
              </PanelInner>
            </Panel>
            <Footer>
              <Help type="button">?</Help>
              <Push type="button">重置(R)</Push>
              <Push type="button">粘贴(P)</Push>
              <Spacer />
              <Push type="button">取消</Push>
              <Push $primary>确定</Push>
            </Footer>
          </DialogBody>
        </Dialog>
        <Callout />
        <Credit>CSDN @是燕王呀</Credit>
      </Desktop>
    </>
  );
}
